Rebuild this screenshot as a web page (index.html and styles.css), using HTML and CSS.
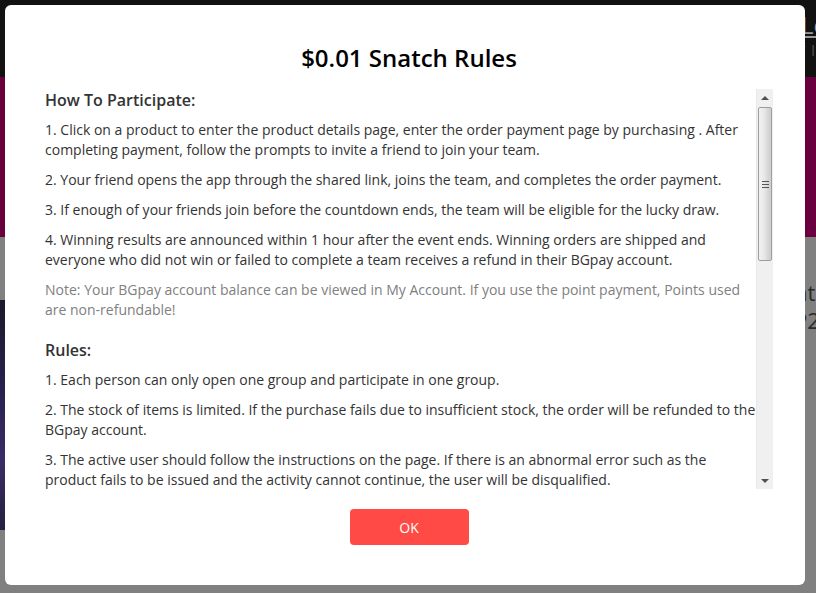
FILE: index.html
```html
<!DOCTYPE html>
<html lang="en">
<head>
<meta charset="utf-8">
<title>$0.01 Snatch Rules</title>
<link rel="stylesheet" href="styles.css">
</head>
<body>
<div class="page">
  <header class="top-bar">
    <span class="top-login">Lo</span>
    <span class="top-mark">✓ |</span>
  </header>
  <section class="banner"></section>
  <section class="content-area">
    <div class="side-image"></div>
    <div class="side-text">
      <span class="side-line">nt</span>
      <span class="side-line">P2</span>
    </div>
  </section>
</div>

<div class="modal">
  <h1 class="modal-title">$0.01 Snatch Rules</h1>
  <div class="modal-body">
    <div class="scroll-content">
      <h2 class="rules-heading">How To Participate:</h2>
      <p>1. Click on a product to enter the product details page, enter the order payment page by purchasing . After completing payment, follow the prompts to invite a friend to join your team.</p>
      <p>2. Your friend opens the app through the shared link, joins the team, and completes the order payment.</p>
      <p>3. If enough of your friends join before the countdown ends, the team will be eligible for the lucky draw.</p>
      <p>4. Winning results are announced within 1 hour after the event ends. Winning orders are shipped and everyone who did not win or failed to complete a team receives a refund in their BGpay account.</p>
      <p class="note">Note: Your BGpay account balance can be viewed in My Account. If you use the point payment, Points used are non-refundable!</p>
      <h2 class="rules-heading second">Rules:</h2>
      <p>1. Each person can only open one group and participate in one group.</p>
      <p>2. The stock of items is limited. If the purchase fails due to insufficient stock, the order will be refunded to the BGpay account.</p>
      <p>3. The active user should follow the instructions on the page. If there is an abnormal error such as the product fails to be issued and the activity cannot continue, the user will be disqualified.</p>
      <p>4. Banggood reserves the right of final interpretation of this activity within the scope permitted by law.</p>
    </div>
    <div class="scrollbar">
      <div class="sb-btn sb-up"><span class="tri-up"></span></div>
      <div class="sb-track">
        <div class="sb-thumb"><span class="grip"></span></div>
      </div>
      <div class="sb-btn sb-down"><span class="tri-down"></span></div>
    </div>
  </div>
  <div class="modal-footer">
    <button class="ok-btn" type="button">OK</button>
  </div>
</div>
</body>
</html>
```
FILE: styles.css
```css
* { box-sizing: border-box; }
html, body {
  margin: 0;
  padding: 0;
  width: 816px;
  height: 593px;
  overflow: hidden;
  font-family: "Open Sans", "Liberation Sans", sans-serif;
}
.page {
  display: flex;
  flex-direction: column;
  height: 593px;
}
.top-bar {
  height: 77px;
  background: #121212;
  display: flex;
  flex-direction: column;
  align-items: flex-end;
  padding: 12px 0 0 0;
}
.top-login {
  color: #9a9a9a;
  font-size: 24px;
  line-height: 26px;
  margin-right: -12px;
  text-decoration: underline;
}
.top-mark {
  color: #777;
  font-size: 11px;
  line-height: 14px;
  margin-top: 4px;
}
.banner {
  height: 160px;
  background: #6b003f;
}
.content-area {
  flex: 1;
  background: #808080;
  display: flex;
  justify-content: space-between;
}
.side-image {
  width: 12px;
  margin-top: 63px;
  height: 230px;
  background: linear-gradient(180deg, #1c1a2c 0%, #2a2050 40%, #3a2c66 70%, #252040 100%);
}
.side-text {
  width: 16px;
  padding-top: 42px;
  display: flex;
  flex-direction: column;
  gap: 2px;
  overflow: hidden;
}
.side-line {
  font-size: 22px;
  line-height: 26px;
  color: #2a2a2a;
  margin-left: -6px;
  white-space: nowrap;
}

.modal {
  position: fixed;
  left: 5px;
  top: 5px;
  width: 800px;
  height: 580px;
  background: #fff;
  border-radius: 6px;
  padding: 38px 32px 0 40px;
  display: flex;
  flex-direction: column;
}
.modal-title {
  margin: 0 0 16px 0;
  text-align: center;
  font-size: 24px;
  line-height: 30px;
  font-weight: 600;
  color: #000;
}
.modal-body {
  height: 400px;
  display: flex;
}
.scroll-content {
  flex: 1;
  overflow: hidden;
  color: #333;
  font-size: 14px;
  line-height: 20px;
}
.rules-heading {
  margin: 0 0 9px 0;
  font-size: 16px;
  line-height: 22px;
  font-weight: 600;
  color: #333;
}
.rules-heading.second {
  margin-top: 19px;
}
.scroll-content p {
  margin: 0 0 10px 0;
}
.scroll-content p.note {
  color: #808080;
}

.scrollbar {
  width: 17px;
  display: flex;
  flex-direction: column;
  background: #f0f0f0;
  border-left: 1px solid #e8e8e8;
}
.sb-btn {
  height: 17px;
  display: flex;
  align-items: center;
  justify-content: center;
}
.tri-up {
  width: 0; height: 0;
  border-left: 4px solid transparent;
  border-right: 4px solid transparent;
  border-bottom: 4px solid #505050;
}
.tri-down {
  width: 0; height: 0;
  border-left: 4px solid transparent;
  border-right: 4px solid transparent;
  border-top: 4px solid #505050;
}
.sb-track {
  flex: 1;
  padding: 1px 0 0 0;
}
.sb-thumb {
  height: 154px;
  margin: 0 1px;
  border: 1px solid #9d9d9d;
  border-radius: 2px;
  background: linear-gradient(90deg, #f2f2f2 0%, #e8e8e8 45%, #d6d6d6 75%, #cfcfcf 100%);
  display: flex;
  align-items: center;
  justify-content: center;
}
.grip {
  width: 7px;
  height: 7px;
  background: repeating-linear-gradient(180deg, #555 0px, #555 1px, transparent 1px, transparent 3px);
}

.modal-footer {
  display: flex;
  justify-content: center;
  padding-top: 20px;
}
.ok-btn {
  width: 119px;
  height: 36px;
  border: none;
  border-radius: 4px;
  background: #ff4a46;
  color: #fff;
  font-family: "Open Sans", "Liberation Sans", sans-serif;
  font-size: 14px;
  cursor: pointer;
}
```
